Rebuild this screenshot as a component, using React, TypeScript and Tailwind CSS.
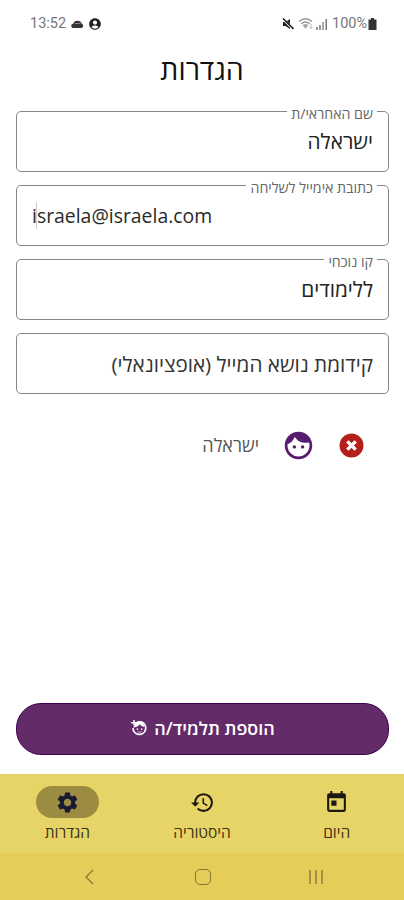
import type { ReactNode } from "react";
import {
  MdAccountCircle,
  MdFace,
  MdHistory,
  MdSettings,
  MdToday,
} from "react-icons/md";

const FIELDS = [
  { label: "שם האחראי/ת", value: "ישראלה" },
  { label: "כתובת אימייל לשליחה", value: "israela@israela.com", ltr: true },
  { label: "קו נוכחי", value: "ללימודים" },
  { placeholder: "קידומת נושא המייל (אופציונאלי)" },
];

function StatusBar() {
  return (
    <div
      dir="ltr"
      className="flex h-[47px] items-center justify-between pl-[30px] pr-[27px] font-['Roboto',sans-serif] text-[14.500px] text-[#777]"
    >
      <div className="flex items-center">
        <span className="w-[36px] whitespace-nowrap">13:52</span>
        <svg viewBox="0 0 13 8" className="ml-[5px] h-[8px] w-[13px]">
          <path d="M2.500 8a2 2 0 0 1-.3-4.200 4.500 4.500 0 0 1 8.600 0A2.200 2.200 0 0 1 10.500 8z" fill="#333" />
          <path d="M3.500 3.500h6" stroke="#888" />
        </svg>
        <MdAccountCircle className="ml-[4px] size-[14px] text-[#222]" />
      </div>
      <div className="flex items-center">
        <svg viewBox="0 0 12 12" className="size-[12px]">
          <path d="M1 4h2.500L8 1v10L3.500 8H1z" fill="#222" />
          <path d="M1 1l10.500 10.500" stroke="#fff" strokeWidth="2.400" />
          <path d="M1 .5l10.500 10.500" stroke="#222" strokeWidth="1.600" />
        </svg>
        <svg viewBox="0 0 16 13" className="ml-[4px] h-[13px] w-[16px]" fill="none">
          <path d="M1 4.500Q7.500-1 14 4.500M3.200 6.800q4.300-3.600 8.600 0" stroke="#999" strokeWidth="1.300" />
          <path d="M4.500 8.200q3-2.400 6 0l-3 3.500z" fill="#aaa" />
          <path d="M13 7v4.500m-1.500-1.500L13 11.500l1.500-1.500" stroke="#bbb" />
        </svg>
        <svg viewBox="0 0 12 12" className="ml-[2px] size-[12px]">
          <path d="M0 9h2v3H0zM3 7h2v5H3z" fill="#999" />
          <path d="M6 4h2v8H6z" fill="#aaa" />
          <path d="M9.500 1h1.500v11H9.500z" fill="#777" />
        </svg>
        <span className="ml-[4px] w-[36px] whitespace-nowrap">100%</span>
        <svg viewBox="0 0 9 12" className="h-[12px] w-[9px]" fill="#333">
          <path d="M3 0h3v1.500h2.500V12H.5V1.500H3z" />
        </svg>
      </div>
    </div>
  );
}

function Field({
  label,
  value,
  placeholder,
  ltr,
}: {
  label?: string;
  value?: string;
  placeholder?: string;
  ltr?: boolean;
}) {
  return (
    <div className="relative flex h-[61px] items-center rounded-[5px] border border-[#858585] px-[15px]">
      {label && (
        <span className="absolute right-[11px] top-[-8px] whitespace-nowrap bg-white px-[4px] text-[14.200px] leading-[20px] text-[#666]">
          {label}
        </span>
      )}
      {ltr ? (
        <span dir="ltr" className="relative w-full text-left text-[19.400px] leading-[26px] text-[#2a2a2a]">
          {value}
          <span className="absolute left-[4px] top-[-1px] h-[27px] w-px bg-[#ccc]" />
        </span>
      ) : (
        <span
          className={
            placeholder
              ? "mt-[2px] whitespace-nowrap text-[20.700px] text-[#333]"
              : "mt-[-1px] text-[20.800px] text-[#222]"
          }
        >
          {value ?? placeholder}
        </span>
      )}
    </div>
  );
}

function NavItem({ icon, label, active }: { icon: ReactNode; label: string; active?: boolean }) {
  return (
    <div className="flex flex-1 flex-col items-center">
      <span
        className={`flex h-[32px] w-[63px] items-center justify-center rounded-full ${
          active ? "bg-[#9b8c41] text-[#191933]" : "text-[#1c1a10]"
        }`}
      >
        {icon}
      </span>
      <span className="mt-[4px] text-[15.500px] leading-[20px] text-[#3b3419]">{label}</span>
    </div>
  );
}

// Face outline with a small plus in the upper left corner
function AddFaceIcon() {
  return (
    <svg viewBox="0 0 17 17" className="size-[18px]" fill="none">
      <path d="M6 3.600Q8 2 11 2.900a6 6 0 1 1-8.100 5.500" stroke="#fff" strokeWidth="1.600" />
      <path d="M3 8q4 0 6-3 2 2.500 5 2.500Q13 3 9 2.500L5 4z" fill="#fff" />
      <path d="M3.800 1v5M1.200 3.500h5" stroke="#fff" strokeWidth="1.400" />
      <circle cx="7" cy="9.500" r=".8" fill="#fff" />
      <circle cx="11" cy="9.500" r=".8" fill="#fff" />
      <path d="M7 12q2 1 4 0" stroke="#fff" strokeWidth=".7" />
    </svg>
  );
}

export default function App() {
  return (
    <div
      dir="rtl"
      className="flex h-[900px] w-[404px] flex-col overflow-hidden bg-white font-['Open_Sans','Noto_Sans',sans-serif]"
    >
      <StatusBar />
      <h1 className="h-[64px] pt-[2px] text-center text-[28.500px] leading-[40px] text-[#111]">הגדרות</h1>

      <main className="flex flex-1 flex-col pl-[16px] pr-[15px] pt-[0.4px]">
        <div className="flex flex-col gap-[12.900px]">
          {FIELDS.map((f, i) => (
            <Field key={i} {...f} />
          ))}
        </div>

        <div className="mt-[35px] flex h-[32px] items-center pr-[25px]">
          <svg viewBox="0 0 24 24" className="size-[25px]">
            <circle cx="12" cy="12" r="11.500" fill="#b3201b" />
            <path d="M8 8l8 8M16 8l-8 8" stroke="#fff" strokeWidth="3.200" />
          </svg>
          <MdFace className="mr-[24px] size-[33px] text-[#571c70]" />
          <span className="mr-[23px] text-[18px] text-[#555]">ישראלה</span>
        </div>

        <button className="mb-[19px] mt-auto flex h-[52px] items-center justify-center gap-[6px] rounded-[25px] border border-[#410052] bg-[#642b69] pb-[2px] text-[17.900px] font-semibold text-white">
          <span>הוספת תלמיד/ה</span>
          <AddFaceIcon />
        </button>
      </main>

      <nav className="flex h-[79px] bg-[#e7d466] pt-[12px]">
        <NavItem icon={<MdToday className="size-[25px]" />} label="היום" />
        <NavItem icon={<MdHistory className="size-[25px]" />} label="היסטוריה" />
        <NavItem icon={<MdSettings className="size-[25px]" />} label="הגדרות" active />
      </nav>

      <div dir="ltr" className="flex h-[47px] items-center bg-[#e6cd59] pl-[84px]">
        <svg viewBox="0 0 10 16" className="h-[16px] w-[10px]" fill="none" stroke="#85773a" strokeWidth="1.300">
          <path d="M9 1L2 8l7 7" />
        </svg>
        <span className="ml-[101px] size-[16px] rounded-[5px] border-[1.500px] border-[#85773a]" />
        <svg viewBox="0 0 16 14" className="ml-[97px] h-[14px] w-[16px]" stroke="#85773a" strokeWidth="1.400">
          <path d="M2 0v14M8 0v14M14 0v14" />
        </svg>
      </div>
    </div>
  );
}
